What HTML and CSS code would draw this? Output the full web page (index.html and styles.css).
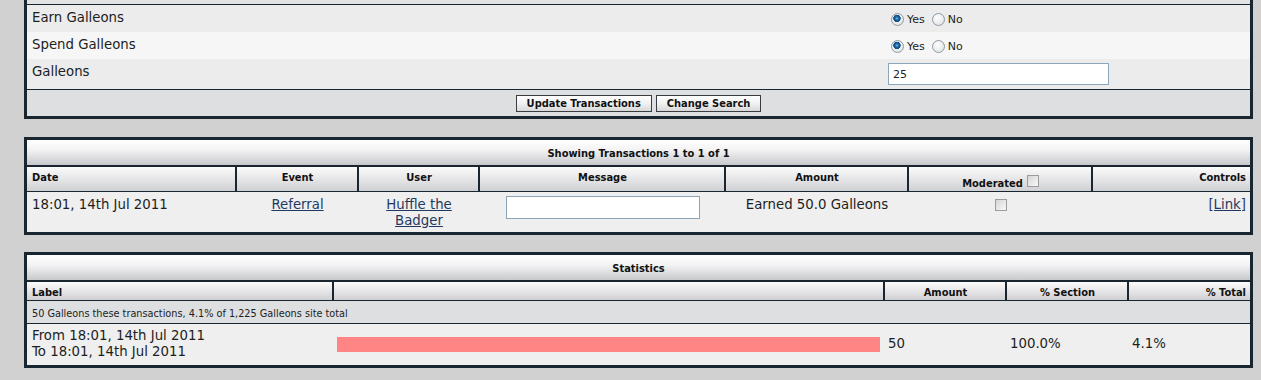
FILE: index.html
```html
<!DOCTYPE html>
<html lang="en">
<head>
    <meta charset="UTF-8">
    <title>Galleon Transactions</title>
    <link rel="stylesheet" href="styles.css">
</head>
<body>
<div class="page">

    <div class="box form-box">
        <div class="form-top"></div>
        <div class="form-row">
            <div class="form-label">Earn Galleons</div>
            <div class="form-field">
                <label class="choice"><input type="radio" class="radio" name="earn" checked> Yes</label>
                <label class="choice"><input type="radio" class="radio" name="earn"> No</label>
            </div>
        </div>
        <div class="form-row alt">
            <div class="form-label">Spend Galleons</div>
            <div class="form-field">
                <label class="choice"><input type="radio" class="radio" name="spend" checked> Yes</label>
                <label class="choice"><input type="radio" class="radio" name="spend"> No</label>
            </div>
        </div>
        <div class="form-row">
            <div class="form-label">Galleons</div>
            <div class="form-field input-field">
                <input type="text" class="text-input amount-input" value="25">
            </div>
        </div>
        <div class="form-buttons">
            <button class="btn">Update Transactions</button>
            <button class="btn">Change Search</button>
        </div>
    </div>

    <!-- Transactions -->
    <div class="box">
        <div class="box-title">Showing Transactions 1 to 1 of 1</div>
        <div class="grid tx-cols grid-head">
            <div class="th">Date</div>
            <div class="th center">Event</div>
            <div class="th center">User</div>
            <div class="th center">Message</div>
            <div class="th center">Amount</div>
            <div class="th center moderated"><span>Moderated</span><input type="checkbox" class="check"></div>
            <div class="th right">Controls</div>
        </div>
        <div class="grid tx-cols grid-row">
            <div class="td">18:01, 14th Jul 2011</div>
            <div class="td center"><a href="#">Referral</a></div>
            <div class="td center"><a href="#">Huffle the Badger</a></div>
            <div class="td center"><input type="text" class="text-input msg-input"></div>
            <div class="td center">Earned 50.0 Galleons</div>
            <div class="td center"><input type="checkbox" class="check"></div>
            <div class="td right"><a href="#">[Link]</a></div>
        </div>
    </div>

    <!-- Statistics -->
    <div class="box">
        <div class="box-title">Statistics</div>
        <div class="grid stat-cols grid-head short">
            <div class="th">Label</div>
            <div class="th"></div>
            <div class="th center">Amount</div>
            <div class="th center">% Section</div>
            <div class="th right">% Total</div>
        </div>
        <div class="summary">50 Galleons these transactions, 4.1% of 1,225 Galleons site total</div>
        <div class="grid stat-cols grid-row stat-row">
            <div class="td">From 18:01, 14th Jul 2011<br>To 18:01, 14th Jul 2011</div>
            <div class="td bar-cell"><div class="bar" style="width: 100%"></div></div>
            <div class="td">50</div>
            <div class="td">100.0%</div>
            <div class="td">4.1%</div>
        </div>
    </div>

</div>
</body>
</html>
```

FILE: styles.css
```css
body {
    margin: 0;
    background: #d1d1d1;
    font-family: "DejaVu Sans", Verdana, sans-serif;
    font-size: 13.3px;
    color: #1c1e22;
}
.page {
    padding: 0 8px 20px 24px;
}
.box {
    border: 3px solid #19262f;
    background: #19262f;
}
.box + .box {
    margin-top: 17px;
}
.form-box {
    border-top: 0;
    margin-bottom: 18px;
}
a {
    color: #1f3a5f;
}

/* search form */
.form-top {
    height: 4px;
    background: #e2e3e5;
    border-bottom: 1px solid #19262f;
}
.form-row {
    display: grid;
    grid-template-columns: 858px 1fr;
    background: #ececec;
}
.form-row.alt {
    background: #f6f6f6;
}
.form-label {
    padding: 5px 5px 6px;
    line-height: 16px;
}
.form-field {
    display: flex;
    align-items: center;
    height: 16px;
    padding: 6px 0 0 3px;
    font-size: 11px;
}
.form-field.input-field {
    height: auto;
    padding-top: 4px;
    padding-bottom: 4px;
}
.choice {
    display: flex;
    align-items: center;
    margin-right: 4px;
}
.radio {
    appearance: none;
    width: 13px;
    height: 13px;
    margin: 1px 3px 0;
    border: 1px solid #8d9ba6;
    border-radius: 50%;
    background: radial-gradient(circle at 40% 35%, #ffffff, #d9dde0);
}
.radio:checked {
    background: radial-gradient(circle at 45% 40%, #7cc0ee 0, #1f6fae 1.5px, #0d4a7c 3.4px, transparent 4px),
                radial-gradient(circle at 40% 35%, #ffffff, #d9dde0);
}
.text-input {
    box-sizing: border-box;
    border: 1px solid #8ea6ba;
    background: #fff;
    padding: 0 4px;
    font-family: "DejaVu Sans", Verdana, sans-serif;
    font-size: 11px;
    color: #1c1e22;
}
.amount-input {
    width: 221px;
    height: 22px;
}
.form-buttons {
    display: flex;
    justify-content: center;
    gap: 4px;
    height: 21px;
    padding-top: 5px;
    background: #dedfe1;
    border-top: 1px solid #19262f;
}
.btn {
    height: 17px;
    padding: 0 10px;
    border: 1px solid #3a3d40;
    background: linear-gradient(#ffffff, #f1f1f1 50%, #d8d8d8);
    font-family: "DejaVu Sans Condensed", Tahoma, sans-serif;
    font-weight: bold;
    font-size: 11px;
    color: #111;
    cursor: pointer;
}

/* result tables */
.box-title {
    height: 23px;
    padding-top: 2px;
    line-height: 23px;
    text-align: center;
    background: linear-gradient(#ffffff, #f3f3f4 40%, #c8c9cc);
    border-bottom: 2px solid #19262f;
    font-family: "DejaVu Sans Condensed", Tahoma, sans-serif;
    font-weight: bold;
    font-size: 11px;
    color: #111;
}
.grid {
    display: grid;
    column-gap: 2px;
}
.tx-cols {
    grid-template-columns: 208px 120px 119px 244px 181px 182px 157px;
}
.stat-cols {
    grid-template-columns: 305px 549px 120px 120px 121px;
}
.grid-head {
    border-bottom: 1px solid #19262f;
}
.th {
    padding: 4px 4px 0 5px;
    line-height: 13px;
    background: linear-gradient(#fbfbfb, #e4e4e6 55%, #cfd0d3);
    font-family: "DejaVu Sans Condensed", Tahoma, sans-serif;
    font-weight: bold;
    font-size: 11px;
    color: #111;
}
.short .th {
    padding-bottom: 1px;
}
.th.moderated {
    display: flex;
    justify-content: center;
    align-items: flex-end;
    padding-top: 8px;
    padding-bottom: 1px;
}
.center {
    text-align: center;
}
.right {
    text-align: right;
}
.check {
    appearance: none;
    box-sizing: border-box;
    width: 12px;
    height: 12px;
    margin: 0 0 3px 4px;
    border: 1px solid #9c9c9c;
    background: linear-gradient(135deg, #d6d6d6, #f8f8f8);
}
.td .check {
    margin: 2px 0 0;
}
.grid-row {
    background: #efefef;
}
.td {
    padding: 5px 4px 3px 5px;
    line-height: 16px;
}
.msg-input {
    width: 194px;
    height: 23px;
    margin-top: -1px;
}
.summary {
    padding: 6px 5px 3px;
    line-height: 13px;
    background: #dedfe1;
    border-bottom: 1px solid #19262f;
    font-family: "DejaVu Sans Condensed", Tahoma, sans-serif;
    font-size: 10.8px;
}
.stat-row .td {
    display: flex;
    align-items: center;
    padding: 4px 3px 5px;
}
.stat-row .td:first-child {
    padding-left: 5px;
}
.bar {
    height: 15px;
    background: #ff8585;
}
```
